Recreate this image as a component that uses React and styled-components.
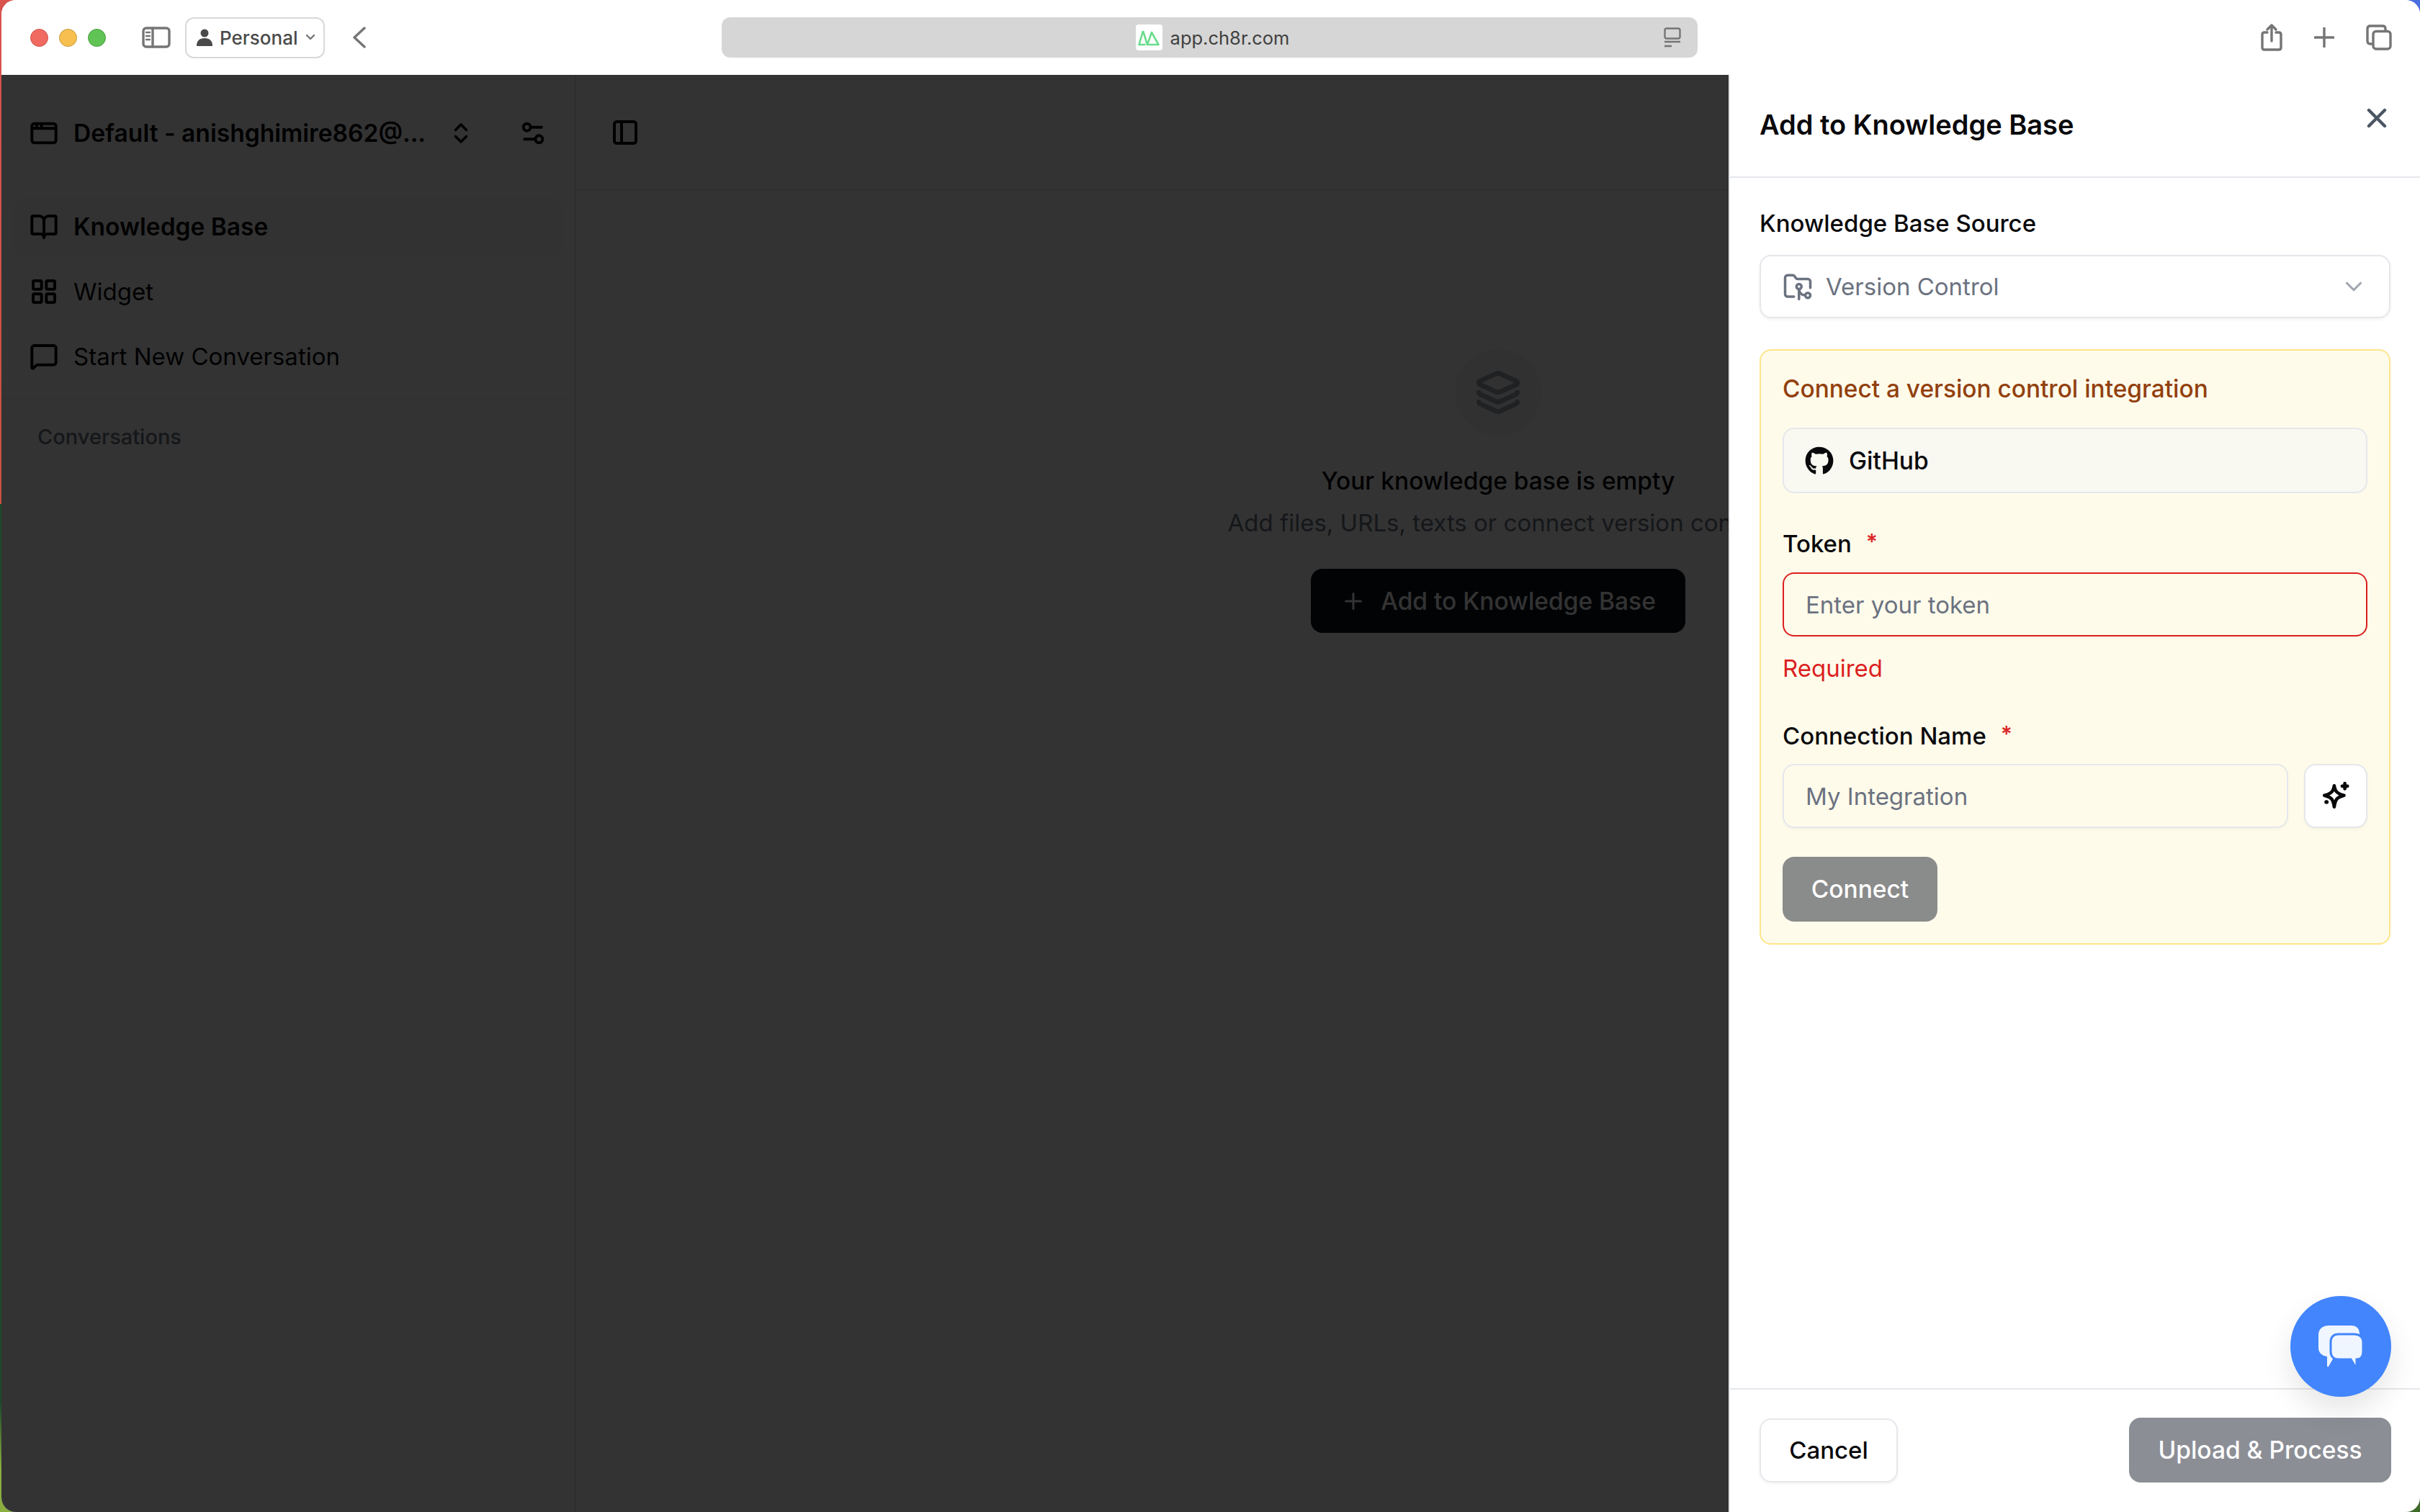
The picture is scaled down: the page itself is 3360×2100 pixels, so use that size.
import React from "react";
import styled, { createGlobalStyle } from "styled-components";
import {
  AppWindow,
  BookOpen,
  ChevronDown,
  ChevronsUpDown,
  FolderGit2,
  Layers,
  LayoutGrid,
  MessageSquare,
  PanelLeft,
  Plus,
  Settings2,
  X,
} from "lucide-react";
import { FaGithub } from "react-icons/fa";

const GlobalStyle = createGlobalStyle`
  * { box-sizing: border-box; }
  html, body { margin: 0; padding: 0; }
  body { font-family: Inter, "Liberation Sans", sans-serif; color: #09090b; }
`;

// desktop wallpaper that peeks out at the window edges
const Wallpaper = styled.div`
  width: 3360px;
  height: 2100px;
  padding-left: 2px;
  overflow: hidden;
  background:
    linear-gradient(#d9534f 0, #c94f3f 700px, #1d4a2b 700px, #1d4a2b 1950px, #8aae3e 2040px) left / 50% 100% no-repeat,
    linear-gradient(#4a6de0 0, #4a6de0 1000px, #3d6b2a 1000px) right / 50% 100% no-repeat;
`;

const Window = styled.div`
  height: 100%;
  display: flex;
  flex-direction: column;
  border-radius: 20px;
  overflow: hidden;
  background: #fff;
`;

// Safari toolbar
const Toolbar = styled.div`
  height: 104px;
  flex: none;
  display: grid;
  grid-template-columns: 1000px 1355px 1fr;
  align-items: center;
  background: #fff;
`;

const ToolLeft = styled.div`
  display: flex;
  align-items: center;
  padding-left: 40px;
`;

const Light = styled.span`
  width: 25px;
  height: 25px;
  border-radius: 50%;
  margin-right: 15px;
  background: ${(p) => p.$color};
  border: 1px solid ${(p) => p.$edge};
`;

const ToolGlyph = styled.svg`
  display: block;
  flex: none;
  fill: none;
  stroke: #757575;
  stroke-width: 3.4;
  stroke-linecap: round;
  stroke-linejoin: round;
`;

const SidebarGlyph = styled(ToolGlyph)`
  margin-left: 35px;
`;

const ProfileButton = styled.div`
  width: 194px;
  height: 57px;
  margin-left: 20px;
  display: flex;
  align-items: center;
  padding-left: 14px;
  border: 2px solid #d8d8d8;
  border-radius: 12px;
  font-size: 26px;
  font-weight: 500;
  color: #4a4a4a;
`;

const ProfileName = styled.span`
  margin-left: 10px;
  margin-right: 10px;
`;

const BackGlyph = styled(ToolGlyph)`
  margin-left: 38px;
`;

const UrlBar = styled.div`
  position: relative;
  height: 56px;
  display: flex;
  align-items: center;
  justify-content: center;
  gap: 11px;
  padding-left: 8px;
  background: #d6d6d6;
  border-radius: 12px;
  font-size: 25.5px;
  color: #3f3f3f;
`;

const Favicon = styled.span`
  width: 37px;
  height: 36px;
  display: flex;
  align-items: center;
  justify-content: center;
  background: #fff;
  border-radius: 4px;
`;

const ReaderGlyph = styled(ToolGlyph)`
  position: absolute;
  right: 23px;
  top: 14px;
`;

const ToolRight = styled.div`
  display: flex;
  align-items: center;
  justify-content: flex-end;
  gap: 44px;
  padding-right: 39px;
`;

// app under the sheet
const Body = styled.div`
  position: relative;
  flex: 1;
  min-height: 0;
  display: flex;
`;

const Sidebar = styled.aside`
  width: 798px;
  flex: none;
  display: flex;
  flex-direction: column;
  border-right: 2px solid #e5e7eb;
`;

const TeamRow = styled.div`
  height: 161px;
  flex: none;
  display: flex;
  align-items: center;
  padding-left: 39px;
`;

const TeamName = styled.span`
  margin-left: 21px;
  width: 520px;
  font-size: 33.6px;
  font-weight: 600;
  white-space: nowrap;
`;

const SettingsSlot = styled.span`
  display: flex;
  margin-left: 62px;
`;

const Nav = styled.nav`
  display: flex;
  flex-direction: column;
  gap: 6px;
  padding: 8px 18px 17px;
  border-bottom: 2px solid #f3f4f6;
`;

const NavItem = styled.div`
  height: 84px;
  display: flex;
  align-items: center;
  gap: 21px;
  padding-left: 21px;
  border-radius: 16px;
  font-size: ${(p) => (p.$active ? 33.5 : 33)}px;
  font-weight: ${(p) => (p.$active ? 600 : 400)};
  background: ${(p) => (p.$active ? "#f9fafb" : "transparent")};
`;

const SectionLabel = styled.div`
  padding: 33px 0 0 50px;
  font-size: 29px;
  font-weight: 500;
  color: #6b7280;
`;

const Main = styled.main`
  flex: 1;
  min-width: 0;
`;

const MainHeader = styled.div`
  height: 161px;
  display: flex;
  align-items: center;
  padding-left: 48px;
  border-bottom: 2px solid #e5e7eb;
`;

const EmptyState = styled.div`
  display: flex;
  flex-direction: column;
  align-items: center;
  padding-top: 220px;
`;

const EmptyIcon = styled.div`
  width: 120px;
  height: 120px;
  display: flex;
  align-items: center;
  justify-content: center;
  border-radius: 50%;
  background: #f3f4f6;
  color: #9ca3af;
`;

const EmptyTitle = styled.h2`
  margin: 40px 0 0;
  font-size: 33.500px;
  line-height: 46px;
  font-weight: 500;
`;

const EmptyText = styled.p`
  margin: 12px 0 0;
  font-size: 33px;
  line-height: 46px;
  white-space: nowrap;
  color: #6b7280;
`;

const AddButton = styled.div`
  margin-top: 41px;
  width: 520px;
  height: 89px;
  display: flex;
  align-items: center;
  justify-content: center;
  gap: 20px;
  border-radius: 16px;
  background: #0b0f19;
  color: #fff;
  font-size: 33.500px;
  font-weight: 500;
`;

const Overlay = styled.div`
  position: absolute;
  inset: 0;
  background: rgba(0, 0, 0, 0.8);
`;

// right hand sheet
const Sheet = styled.section`
  position: absolute;
  top: 0;
  right: 0;
  bottom: 0;
  width: 960px;
  display: flex;
  flex-direction: column;
  background: #fff;
  border-left: 2px solid #e5e7eb;
`;

const SheetHeader = styled.header`
  height: 143px;
  flex: none;
  padding: 46px 0 0 41px;
  border-bottom: 2px solid #e5e7eb;
`;

const SheetTitle = styled.h1`
  margin: 0;
  font-size: 38px;
  line-height: 46px;
  font-weight: 600;
  color: #09090b;
`;

const CloseButton = styled.div`
  position: absolute;
  top: 38px;
  right: 38px;
  color: #4b5563;
  display: flex;
`;

const SheetBody = styled.div`
  flex: 1;
  padding: 43px 41px 0;
`;

const FieldLabel = styled.label`
  display: flex;
  gap: 20px;
  font-size: 33px;
  line-height: 40px;
  font-weight: 500;
  color: #09090b;
  margin-top: ${(p) => p.$top || 0}px;
  margin-bottom: ${(p) => p.$bottom || 20}px;
`;

const Asterisk = styled.span`
  color: #dc2626;
  font-size: 30px;
  font-weight: 600;
  line-height: 34px;
`;

const SelectBox = styled.div`
  height: 88px;
  display: flex;
  align-items: center;
  padding: 0 30px;
  gap: 18px;
  border: 2px solid #e5e7eb;
  border-radius: 16px;
  box-shadow: 0 2px 4px rgba(0, 0, 0, 0.05);
  font-size: 33px;
  color: #6b7280;
`;

const SelectText = styled.span`
  flex: 1;
`;

const ConnectPanel = styled.div`
  margin-top: 43px;
  padding: 30px;
  border: 2px solid #fde68a;
  border-radius: 16px;
  background: #fffbeb;
`;

const PanelTitle = styled.div`
  font-size: 33.400px;
  line-height: 46px;
  font-weight: 500;
  color: #92400e;
`;

const ProviderRow = styled.div`
  margin-top: 31px;
  height: 91px;
  display: flex;
  align-items: center;
  gap: 21px;
  padding-left: 29px;
  border: 2px solid #e5e7eb;
  border-radius: 16px;
  background: #f9f8f1;
  font-size: 33.500px;
  font-weight: 500;
`;

const TextInput = styled.div`
  height: 89px;
  flex: 1;
  display: flex;
  align-items: center;
  padding-left: 30px;
  border: 2px solid ${(p) => (p.$error ? "#dc1f1f" : "#e5e7eb")};
  border-radius: 16px;
  box-shadow: 0 2px 4px rgba(0, 0, 0, 0.04);
  font-size: 33px;
  color: #6b7280;
`;

const ErrorText = styled.div`
  margin-top: 24px;
  font-size: 33px;
  line-height: 40px;
  color: #dc1f1f;
`;

const NameRow = styled.div`
  display: flex;
  gap: 22px;
`;

const SparkleButton = styled.div`
  width: 88px;
  height: 89px;
  flex: none;
  display: flex;
  align-items: center;
  justify-content: center;
  border: 2px solid #e5e7eb;
  border-radius: 16px;
  background: #fff;
  box-shadow: 0 2px 4px rgba(0, 0, 0, 0.04);
`;

const ConnectButton = styled.div`
  margin-top: 40px;
  width: 215px;
  height: 90px;
  display: flex;
  align-items: center;
  justify-content: center;
  border-radius: 16px;
  background: #8a8b8b;
  color: #fff;
  font-size: 33.500px;
  font-weight: 500;
`;

const SheetFooter = styled.footer`
  height: 172px;
  flex: none;
  display: flex;
  align-items: center;
  justify-content: space-between;
  padding: 0 40px 2px 41px;
  border-top: 2px solid #e5e7eb;
`;

const CancelButton = styled.div`
  width: 192px;
  height: 89px;
  display: flex;
  align-items: center;
  justify-content: center;
  border: 2px solid #e5e7eb;
  border-radius: 16px;
  box-shadow: 0 2px 4px rgba(0, 0, 0, 0.05);
  font-size: 33px;
  font-weight: 500;
`;

const UploadButton = styled.div`
  width: 364px;
  height: 90px;
  display: flex;
  align-items: center;
  justify-content: center;
  border-radius: 16px;
  background: #8c8e96;
  color: #fff;
  font-size: 33.500px;
  font-weight: 500;
`;

const ChatBubble = styled.div`
  position: absolute;
  right: 40px;
  bottom: 160px;
  width: 140px;
  height: 140px;
  display: flex;
  align-items: center;
  justify-content: center;
  border-radius: 50%;
  background: #4285fd;
  box-shadow: 0 20px 40px rgba(0, 0, 0, 0.1);
`;

const PersonIcon = () => (
  <svg width="22" height="24" viewBox="0 0 22 24" fill="#4a4a4a">
    <circle cx="11" cy="6" r="5.5" />
    <path d="M0 23c0-6 4-10 11-10s11 4 11 10c0 .6-.4 1-1 1H1c-.6 0-1-.4-1-1z" />
  </svg>
);

const FaviconMark = () => (
  <svg width="30" height="24" viewBox="0 0 30 24" fill="none" stroke="#6bdc8e" strokeWidth="2.6" strokeLinejoin="round">
    <path d="M7 3 1.5 22h9" />
    <path d="M7 3l6 19" />
    <path d="M19 5l-6 17h15.5z" />
  </svg>
);

const SparkleIcon = () => (
  <svg width="42" height="42" viewBox="0 0 40 40" fill="none" stroke="#09090b" strokeWidth="4.4" strokeLinejoin="round" strokeLinecap="round">
    <path d="M18 6c1.4 7.6 3.4 10.2 13 12.8-9.6 2.6-11.600 5.200-13 15.200-1.400-10-3.400-12.600-13-15.200C14.600 16.200 16.600 13.600 18 6z" />
    <path d="M32 3v7M28.500 6.500h7" />
    <path d="M7.500 27.500h.6" strokeWidth="5" />
  </svg>
);

const ChatIcon = () => (
  <svg width="62" height="58" viewBox="0 0 62 58">
    <path
      d="M14 0h31c7 0 12 3 12 12v20c0 7-4 11-11 11H22L14 57c-1 1-2 0-2-1V43C5 42 0 38 0 31V13C0 5 6 0 14 0z"
      fill="#eff6ff"
    />
    <path
      d="M28 12h21c8 0 13 4 13 12v12c0 7-3 11-9 11v9c0 1-1 2-2 1l-6-10H28c-7 0-11-4-11-11V23c0-7 4-11 11-11z"
      fill="#eff6ff"
      stroke="#4285fd"
      strokeWidth="3"
    />
  </svg>
);

const App = () => {
  return (
    <>
      <GlobalStyle />
      <Wallpaper>
        <Window>
          <Toolbar>
            <ToolLeft>
              <Light $color="#f16a61" $edge="#cf5048" />
              <Light $color="#f7bf4f" $edge="#c79a3f" />
              <Light $color="#5fc454" $edge="#4b9c43" />
              <SidebarGlyph width="40" height="30" viewBox="0 0 40 30">
                <rect x="2" y="2" width="36" height="26" rx="4" />
                <path d="M15 2v26" />
                <path d="M6 8h5M6 13h5M6 18h5" strokeWidth="2.4" />
              </SidebarGlyph>
              <ProfileButton>
                <PersonIcon />
                <ProfileName>Personal</ProfileName>
                <ToolGlyph width="14" height="10" viewBox="0 0 14 10">
                  <path d="M2 2l5 5 5-5" strokeWidth="2.400" />
                </ToolGlyph>
              </ProfileButton>
              <BackGlyph width="20" height="30" viewBox="0 0 20 30">
                <path d="M17 2 3 15l14 13" />
              </BackGlyph>
            </ToolLeft>
            <UrlBar>
              <Favicon>
                <FaviconMark />
              </Favicon>
              app.ch8r.com
              <ReaderGlyph width="24" height="28" viewBox="0 0 24 28">
                <rect x="1.500" y="1.500" width="21" height="14" rx="2.500" strokeWidth="2.400" />
                <path d="M1 20h22M1 26h10" strokeWidth="2.400" strokeLinecap="butt" />
              </ReaderGlyph>
            </UrlBar>
            <ToolRight>
              <ToolGlyph width="30" height="38" viewBox="0 0 30 38">
                <path d="M9 12H5c-2 0-3 1-3 3v18c0 2 1 3 3 3h20c2 0 3-1 3-3V15c0-2-1-3-3-3h-4" />
                <path d="M15 24V2M9 8l6-6 6 6" />
              </ToolGlyph>
              <ToolGlyph width="28" height="28" viewBox="0 0 28 28">
                <path d="M14 1v26M1 14h26" />
              </ToolGlyph>
              <ToolGlyph width="36" height="36" viewBox="0 0 36 36">
                <path d="M8 27H6c-2.500 0-4-1.500-4-4V6c0-2.500 1.500-4 4-4h17c2.500 0 4 1.500 4 4v3" />
                <rect x="10" y="9.500" width="24" height="24.500" rx="4" />
              </ToolGlyph>
            </ToolRight>
          </Toolbar>

          <Body>
            <Sidebar>
              <TeamRow>
                <AppWindow size={40} strokeWidth={2.4} />
                <TeamName>Default - anishghimire862@...</TeamName>
                <ChevronsUpDown size={36} strokeWidth={2.4} />
                <SettingsSlot>
                  <Settings2 size={40} strokeWidth={2.4} />
                </SettingsSlot>
              </TeamRow>
              <Nav>
                <NavItem $active>
                  <BookOpen size={40} strokeWidth={2.4} />
                  Knowledge Base
                </NavItem>
                <NavItem>
                  <LayoutGrid size={40} strokeWidth={2.4} />
                  Widget
                </NavItem>
                <NavItem>
                  <MessageSquare size={40} strokeWidth={2.4} />
                  Start New Conversation
                </NavItem>
              </Nav>
              <SectionLabel>Conversations</SectionLabel>
            </Sidebar>

            <Main>
              <MainHeader>
                <PanelLeft size={40} strokeWidth={2.4} />
              </MainHeader>
              <EmptyState>
                <EmptyIcon>
                  <Layers size={64} strokeWidth={2.5} />
                </EmptyIcon>
                <EmptyTitle>Your knowledge base is empty</EmptyTitle>
                <EmptyText>Add files, URLs, texts or connect version control</EmptyText>
                <AddButton>
                  <Plus size={36} />
                  Add to Knowledge Base
                </AddButton>
              </EmptyState>
            </Main>

            <Overlay />

            <Sheet>
              <SheetHeader>
                <SheetTitle>Add to Knowledge Base</SheetTitle>
              </SheetHeader>
              <CloseButton>
                <X size={44} strokeWidth={2.4} />
              </CloseButton>

              <SheetBody>
                <FieldLabel $bottom={24}>Knowledge Base Source</FieldLabel>
                <SelectBox>
                  <FolderGit2 size={42} />
                  <SelectText>Version Control</SelectText>
                  <ChevronDown size={38} color="#a1a6b0" />
                </SelectBox>

                <ConnectPanel>
                  <PanelTitle>Connect a version control integration</PanelTitle>
                  <ProviderRow>
                    <FaGithub size={40} color="#09090b" />
                    GitHub
                  </ProviderRow>

                  <FieldLabel $top={50}>
                    Token <Asterisk>*</Asterisk>
                  </FieldLabel>
                  <TextInput $error>Enter your token</TextInput>
                  <ErrorText>Required</ErrorText>

                  <FieldLabel $top={54} $bottom={19}>
                    Connection Name <Asterisk>*</Asterisk>
                  </FieldLabel>
                  <NameRow>
                    <TextInput>My Integration</TextInput>
                    <SparkleButton>
                      <SparkleIcon />
                    </SparkleButton>
                  </NameRow>

                  <ConnectButton>Connect</ConnectButton>
                </ConnectPanel>
              </SheetBody>

              <SheetFooter>
                <CancelButton>Cancel</CancelButton>
                <UploadButton>Upload &amp; Process</UploadButton>
              </SheetFooter>
            </Sheet>

            <ChatBubble>
              <ChatIcon />
            </ChatBubble>
          </Body>
        </Window>
      </Wallpaper>
    </>
  );
};

export default App;
